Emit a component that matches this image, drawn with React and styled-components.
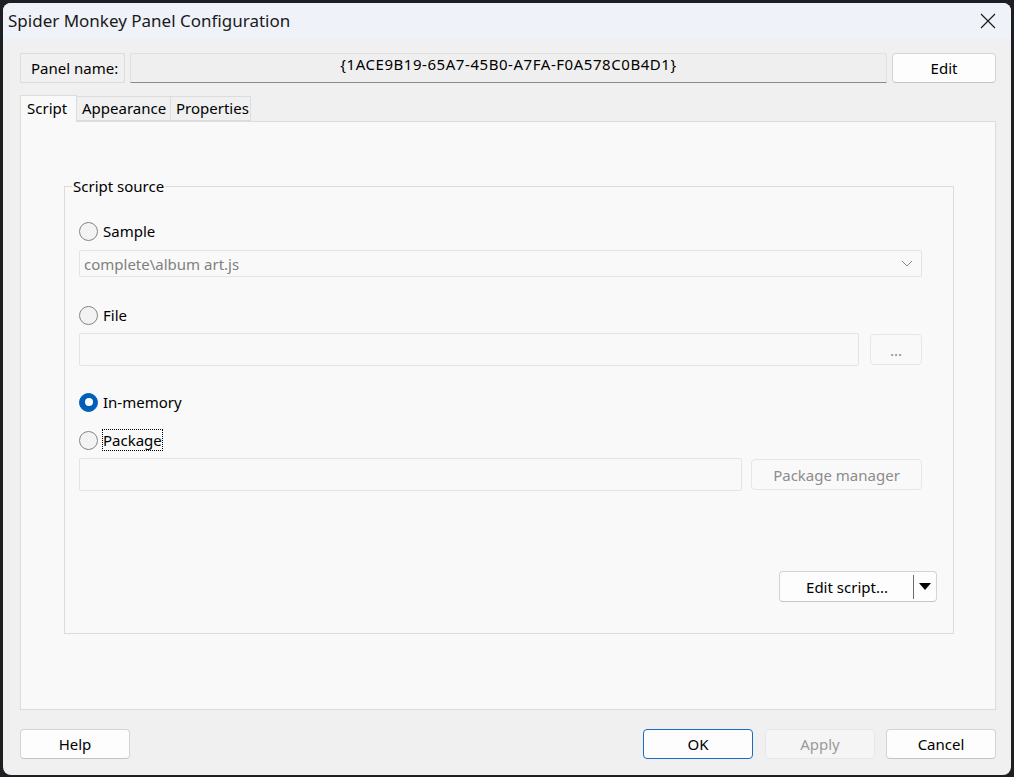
import React from "react";
import styled, { createGlobalStyle } from "styled-components";

const GlobalStyle = createGlobalStyle`
  html, body {
    margin: 0;
    padding: 0;
    background: #1e1f22;
    height: 100%;
    overflow: hidden;
  }
  body {
    font-family: "Noto Sans", "Open Sans", sans-serif;
    font-size: 15px;
    color: #000;
  }
`;

const Window = styled.div`
  margin: 3px 0 0 3px;
  width: 1008px;
  height: 772px;
  box-sizing: border-box;
  background: #f0f0f0;
  border-radius: 8px;
  overflow: hidden;
  display: flex;
  flex-direction: column;
`;

const TitleBar = styled.div`
  height: 35px;
  flex: none;
  background: #eff3f9;
  display: flex;
  align-items: center;
  justify-content: space-between;
  padding: 0 15px 0 5px;
  font-size: 17px;
  color: #1a1a1a;
`;

const Body = styled.div`
  flex: 1;
  display: flex;
  flex-direction: column;
  padding: 15px 15px 0 17px;
`;

const NameRow = styled.div`
  display: flex;
  height: 30px;
  gap: 5px;
`;

const NameLabel = styled.div`
  width: 105px;
  box-sizing: border-box;
  border: 1px solid #dcdcdc;
  display: flex;
  align-items: center;
  padding-left: 10px;
`;

const GuidField = styled.div`
  flex: 1;
  box-sizing: border-box;
  background: #efefef;
  border: 1px solid #e0e0e0;
  border-bottom: 1px solid #8a8a8a;
  border-radius: 3px 3px 0 0;
  text-align: center;
  padding-top: 0;
  line-height: 20px;
  letter-spacing: 0.55px;
`;

const Button = styled.button`
  font: inherit;
  width: ${(p) => p.$w || 110}px;
  height: 30px;
  box-sizing: border-box;
  background: ${(p) => (p.$disabled ? "#f5f5f5" : "#fdfdfd")};
  color: ${(p) => (p.$disabled ? "#9b9b9b" : "#000")};
  border: 1px solid ${(p) => (p.$primary ? "#1a6cc2" : p.$disabled ? "#e8e8e8" : "#d4d4d4")};
  border-bottom-color: ${(p) => (p.$primary ? "#1a6cc2" : p.$disabled ? "#e8e8e8" : "#c4c4c4")};
  border-radius: 4px;
  padding: 0;
  margin-left: ${(p) => p.$ml || 0}px;
  display: flex;
  align-items: center;
  justify-content: center;
`;

const TabStrip = styled.div`
  display: flex;
  align-items: flex-end;
  margin-top: 12px;
  height: 26px;
`;

const Tab = styled.div`
  width: ${(p) => p.$w}px;
  height: ${(p) => (p.$active ? 27 : 25)}px;
  box-sizing: border-box;
  padding: 0 0 2px ${(p) => p.$pad}px;
  background: ${(p) => (p.$active ? "#f9f9f9" : "#f0f0f0")};
  border: 1px solid #dcdcdc;
  border-bottom: ${(p) => (p.$active ? "none" : "1px solid #dcdcdc")};
  border-left: ${(p) => (p.$first ? "1px solid #dcdcdc" : "none")};
  display: flex;
  align-items: center;
  position: relative;
  z-index: ${(p) => (p.$active ? 1 : 0)};
  margin-bottom: ${(p) => (p.$active ? -1 : 0)}px;
`;

const TabPanel = styled.div`
  height: 589px;
  box-sizing: border-box;
  background: #f9f9f9;
  border: 1px solid #dcdcdc;
  padding: 64px 41px 0 43px;
`;

const Group = styled.fieldset`
  margin: 0;
  height: 458px;
  box-sizing: border-box;
  border: 1px solid #dcdcdc;
  padding: 0 31px 0 14px;
  display: flex;
  flex-direction: column;
  position: relative;
  top: -10px;
`;

const Legend = styled.legend`
  padding: 0 1px;
  margin-left: -7px;
  line-height: 20px;
`;

const RadioRow = styled.div`
  display: flex;
  align-items: center;
  height: 22px;
  margin-top: ${(p) => p.$mt}px;
  gap: 5px;
`;

const RadioCircle = styled.span`
  width: 19px;
  height: 19px;
  box-sizing: border-box;
  border-radius: 50%;
  flex: none;
  background: ${(p) => (p.$on ? "#005fb8" : "#f3f3f3")};
  border: 1px solid ${(p) => (p.$on ? "#005fb8" : "#858585")};
  display: flex;
  align-items: center;
  justify-content: center;
  &::after {
    content: "";
    display: ${(p) => (p.$on ? "block" : "none")};
    width: 8px;
    height: 8px;
    border-radius: 50%;
    background: #fff;
  }
`;

const FocusText = styled.span`
  outline: 1px dotted #000;
  outline-offset: 0;
  line-height: 20px;
`;

const FieldRow = styled.div`
  display: flex;
  margin-top: ${(p) => p.$mt}px;
  gap: ${(p) => p.$gap || 0}px;
  align-items: center;
`;

const Combo = styled.div`
  flex: 1;
  height: 27px;
  box-sizing: border-box;
  border: 1px solid #e4e4e4;
  border-radius: 2px;
  background: #f9f9f9;
  color: #808080;
  display: flex;
  align-items: center;
  justify-content: space-between;
  padding: 0 8px 0 4px;
`;

const TextBox = styled.div`
  flex: 1;
  height: 33px;
  box-sizing: border-box;
  border: 1px solid #e4e4e4;
  border-radius: 2px;
  background: #f9f9f9;
`;

const SmallButton = styled.div`
  width: ${(p) => p.$w}px;
  height: 31px;
  box-sizing: border-box;
  border: 1px solid #e6e6e6;
  border-radius: 4px;
  background: #f9f9f9;
  color: #8c8c8c;
  display: flex;
  align-items: center;
  justify-content: center;
  flex: none;
`;

const SplitRow = styled.div`
  display: flex;
  justify-content: flex-end;
  margin-top: 80px;
  margin-right: -15px;
`;

const SplitButton = styled.div`
  width: 158px;
  height: 31px;
  box-sizing: border-box;
  background: #fdfdfd;
  border: 1px solid #d4d4d4;
  border-bottom-color: #c4c4c4;
  border-radius: 4px;
  display: flex;
  align-items: center;
`;

const SplitMain = styled.span`
  flex: 1;
  text-align: center;
  padding-left: 1px;
`;

const SplitDivider = styled.span`
  width: 1px;
  height: 24px;
  background: #6b6b6b;
`;

const SplitArrow = styled.span`
  width: 22px;
  display: flex;
  justify-content: center;
`;

const Footer = styled.div`
  display: flex;
  margin-top: 19px;
`;

const Spacer = styled.div`
  flex: 1;
`;

const Chevron = () => (
  <svg width="12" height="7" viewBox="0 0 12 7">
    <path d="M1 1l5 5 5-5" fill="none" stroke="#8a8a8a" strokeWidth="1" />
  </svg>
);

const CloseIcon = () => (
  <svg width="16" height="16" viewBox="0 0 16 16">
    <path d="M1 1l14 14M15 1L1 15" stroke="#1a1a1a" strokeWidth="1.2" />
  </svg>
);

const Triangle = () => (
  <svg width="12" height="7" viewBox="0 0 12 7">
    <path d="M0 0h12L6 7z" fill="#000" />
  </svg>
);

export default function App() {
  return (
    <>
      <GlobalStyle />
      <Window>
        <TitleBar>
          <span>Spider Monkey Panel Configuration</span>
          <CloseIcon />
        </TitleBar>
        <Body>
          <NameRow>
            <NameLabel>Panel name:</NameLabel>
            <GuidField>{"{1ACE9B19-65A7-45B0-A7FA-F0A578C0B4D1}"}</GuidField>
            <Button $w={104}>Edit</Button>
          </NameRow>
          <TabStrip>
            <Tab $active $first $w={57} $pad={6}>Script</Tab>
            <Tab $w={94} $pad={5}>Appearance</Tab>
            <Tab $w={80} $pad={5}>Properties</Tab>
          </TabStrip>
          <TabPanel>
            <Group>
              <Legend>Script source</Legend>
              <RadioRow $mt={24}>
                <RadioCircle />
                <span>Sample</span>
              </RadioRow>
              <FieldRow $mt={8}>
                <Combo>
                  <span>complete\album art.js</span>
                  <Chevron />
                </Combo>
              </FieldRow>
              <RadioRow $mt={27}>
                <RadioCircle />
                <span>File</span>
              </RadioRow>
              <FieldRow $mt={7} $gap={11}>
                <TextBox />
                <SmallButton $w={52}>...</SmallButton>
              </FieldRow>
              <RadioRow $mt={25}>
                <RadioCircle $on />
                <span>In-memory</span>
              </RadioRow>
              <RadioRow $mt={16}>
                <RadioCircle />
                <FocusText>Package</FocusText>
              </RadioRow>
              <FieldRow $mt={7} $gap={9}>
                <TextBox />
                <SmallButton $w={171}>Package manager</SmallButton>
              </FieldRow>
              <SplitRow>
                <SplitButton>
                  <SplitMain>Edit script...</SplitMain>
                  <SplitDivider />
                  <SplitArrow>
                    <Triangle />
                  </SplitArrow>
                </SplitButton>
              </SplitRow>
            </Group>
          </TabPanel>
          <Footer>
            <Button>Help</Button>
            <Spacer />
            <Button $primary>OK</Button>
            <Button $disabled $ml={12}>Apply</Button>
            <Button $ml={11}>Cancel</Button>
          </Footer>
        </Body>
      </Window>
    </>
  );
}
